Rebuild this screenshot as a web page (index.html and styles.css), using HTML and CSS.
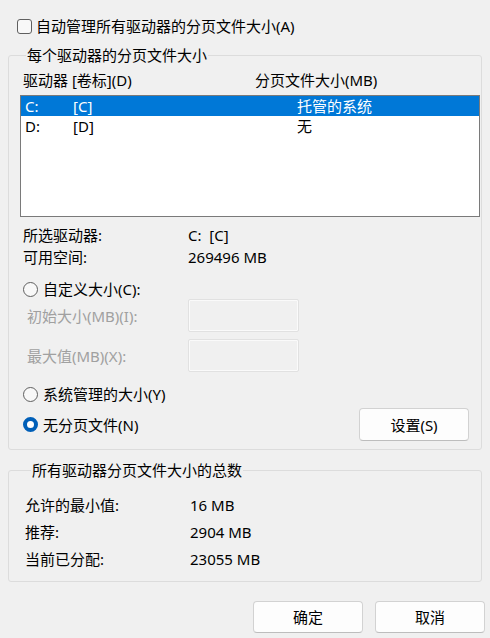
FILE: index.html
```html
<!DOCTYPE html>
<html lang="zh-CN">
<head>
<meta charset="utf-8">
<title>虚拟内存</title>
<link rel="stylesheet" href="styles.css">
</head>
<body>
<div class="dialog">
  <label class="check-row">
    <span class="checkbox"></span>
    <span>自动管理所有驱动器的分页文件大小(A)</span>
  </label>

  <fieldset class="group group-drives">
    <legend>每个驱动器的分页文件大小</legend>
    <div class="list-header">
      <span>驱动器 [卷标](D)</span>
      <span>分页文件大小(MB)</span>
    </div>
    <div class="listbox">
      <div class="list-row selected"><span>C:</span><span>[C]</span><span>托管的系统</span></div>
      <div class="list-row"><span>D:</span><span>[D]</span><span>无</span></div>
    </div>

    <div class="info">
      <span>所选驱动器:</span><span>C:&nbsp;&nbsp;[C]</span>
      <span>可用空间:</span><span>269496 MB</span>
    </div>

    <label class="radio-row first">
      <span class="radio"></span><span>自定义大小(C):</span>
    </label>
    <div class="field-row">
      <span class="disabled">初始大小(MB)(I):</span>
      <span class="textbox"></span>
    </div>
    <div class="field-row second">
      <span class="disabled">最大值(MB)(X):</span>
      <span class="textbox"></span>
    </div>
    <label class="radio-row system">
      <span class="radio"></span><span>系统管理的大小(Y)</span>
    </label>
    <div class="radio-button-row">
      <label class="radio-row inline">
        <span class="radio checked"></span><span>无分页文件(N)</span>
      </label>
      <button class="btn set-btn">设置(S)</button>
    </div>
  </fieldset>

  <fieldset class="group group-total">
    <legend>所有驱动器分页文件大小的总数</legend>
    <div class="totals">
      <span>允许的最小值:</span><span>16 MB</span>
      <span>推荐:</span><span>2904 MB</span>
      <span>当前已分配:</span><span>23055 MB</span>
    </div>
  </fieldset>

  <div class="footer">
    <button class="btn">确定</button>
    <button class="btn">取消</button>
  </div>
</div>
</body>
</html>
```

FILE: styles.css
```css
html, body {
  margin: 0;
  padding: 0;
  background: #f0f0f0;
}

body {
  font-family: "Noto Sans", "Noto Sans CJK SC", sans-serif;
  font-size: 15px;
  line-height: 20px;
  color: #000;
}

.dialog {
  padding-top: 16px;
}

.check-row {
  display: flex;
  align-items: center;
  gap: 4px;
  height: 20px;
  padding-left: 17px;
}

.checkbox {
  width: 13px;
  height: 13px;
  border: 1px solid #5f5f5f;
  border-radius: 3px;
  background: #f8f8f8;
  flex: none;
}

.group {
  margin: 0 8px;
  border: 1px solid #dcdcdc;
  border-radius: 3px;
  min-width: 0;
}

.group legend {
  margin-left: 6px;
  padding: 0 1px;
  line-height: 20px;
  height: 20px;
}

.group-drives {
  margin-top: 9px;
  padding: 5px 0 8px 11px;
}

.list-header {
  display: grid;
  grid-template-columns: 232px 1fr;
  padding-left: 3px;
  height: 20px;
}

.listbox {
  margin-top: 5px;
  width: 458px;
  height: 120px;
  border: 1px solid #7a7a7a;
  background: #fff;
}

.list-row {
  display: grid;
  grid-template-columns: 48px 224px 1fr;
  height: 20px;
  line-height: 20px;
  padding-left: 4px;
}

.list-row.selected {
  background: #0078d7;
  color: #fff;
}

.info {
  margin-top: 7px;
  display: grid;
  grid-template-columns: 165px 1fr;
  grid-auto-rows: 22px;
  line-height: 22px;
  padding-left: 3px;
}

.radio-row {
  display: flex;
  align-items: center;
  gap: 5px;
  height: 20px;
  padding-left: 3px;
}

.radio-row.first {
  margin-top: 11px;
}

.radio-row.system {
  margin-top: 12px;
}

.radio {
  box-sizing: border-box;
  width: 15px;
  height: 15px;
  border: 1px solid #5f5f5f;
  border-radius: 50%;
  background: #f8f8f8;
  flex: none;
}

.radio.checked {
  border: 4px solid #005fb8;
  background: #fff;
}

.field-row {
  display: grid;
  grid-template-columns: 161px 111px;
  align-items: center;
  height: 33px;
  padding-left: 7px;
}

.field-row.second {
  margin-top: 7px;
}

.disabled {
  color: #a0a0a0;
}

.textbox {
  box-sizing: border-box;
  height: 33px;
  border: 1px solid #e1e1e1;
  border-radius: 2px;
  box-shadow: inset 0 0 0 1px #fafafa;
  background: #f0f0f0;
}

.radio-button-row {
  margin-top: 4px;
  display: flex;
  align-items: center;
  justify-content: space-between;
  height: 33px;
  padding-right: 12px;
}

.btn {
  box-sizing: border-box;
  width: 110px;
  height: 33px;
  border: 1px solid #d2d2d2;
  border-bottom-color: #bdbdbd;
  border-radius: 4px;
  background: #fdfdfd;
  font-family: "Noto Sans", "Noto Sans CJK SC", sans-serif;
  font-size: 15px;
  line-height: 20px;
  color: #000;
  padding: 0;
}

.group-total {
  margin-top: 10px;
  padding: 12px 0 8px 16px;
}

.totals {
  display: grid;
  grid-template-columns: 165px 1fr;
  grid-auto-rows: 27px;
  line-height: 27px;
}

.footer {
  margin-top: 19px;
  display: flex;
  justify-content: flex-end;
  gap: 12px;
  padding-right: 5px;
}

.footer .btn {
  height: 32px;
}
```
